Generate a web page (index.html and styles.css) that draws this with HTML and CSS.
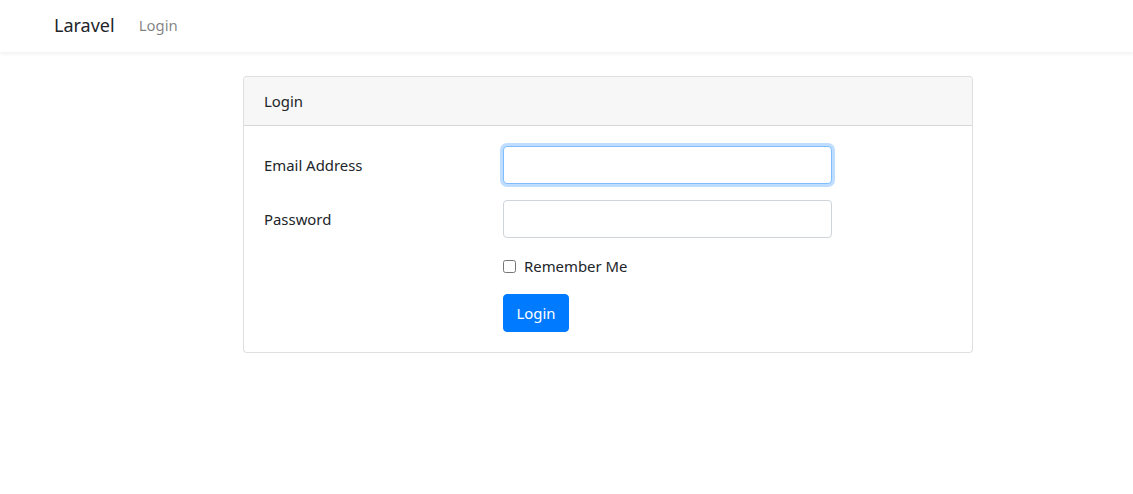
FILE: index.html
```html
<!DOCTYPE html>
<html>
<head>
<meta charset="utf-8">
<link rel="stylesheet" href="styles.css">
</head>
<body>
<nav class="navbar">
  <a class="brand" href="#">Laravel</a>
  <a class="nav-link" href="#">Login</a>
</nav>
<main class="main">
  <div class="card">
    <div class="card-header">Login</div>
    <div class="card-body">
      <div class="form-row">
        <label class="label">Email Address</label>
        <div class="field"><input class="input focus" type="email"></div>
      </div>
      <div class="form-row">
        <label class="label">Password</label>
        <div class="field"><input class="input" type="password"></div>
      </div>
      <div class="form-row">
        <span class="label"></span>
        <div class="field check"><input type="checkbox" class="checkbox"><span>Remember Me</span></div>
      </div>
      <div class="form-row last">
        <span class="label"></span>
        <div class="field"><button class="btn">Login</button></div>
      </div>
    </div>
  </div>
</main>
</body>
</html>
```
FILE: styles.css
```css
* { box-sizing: border-box; }
html, body { margin: 0; padding: 0; }
body {
  font-family: "Segoe UI", "Noto Sans", "Open Sans", sans-serif;
  font-size: 14.9px;
  line-height: 1.6;
  color: #212529;
  background: #fff;
}
.navbar {
  height: 52px;
  display: flex;
  align-items: center;
  padding-left: 54px;
  padding-bottom: 1px;
  background: #fff;
  box-shadow: 0 2px 4px rgba(0,0,0,0.06);
}
.brand {
  font-size: 18px;
  color: #212529;
  text-decoration: none;
  margin-right: 24px;
}
.nav-link {
  color: rgba(0,0,0,0.5);
  text-decoration: none;
}
.main { padding-top: 24px; }
.card {
  margin-left: 243px;
  width: 730px;
  border: 1px solid rgba(0,0,0,0.125);
  border-radius: 4px;
  background: #fff;
}
.card-header {
  height: 49px;
  padding: 1px 20px 0;
  display: flex;
  align-items: center;
  background: #f7f7f7;
  border-bottom: 1px solid rgba(0,0,0,0.125);
  border-radius: 3px 3px 0 0;
}
.card-body { padding: 20px 20px 20px 20px; }
.form-row {
  display: flex;
  align-items: center;
  margin-bottom: 16px;
}
.form-row.last { margin-bottom: 0; }
.label { width: 239px; flex: none; padding-top: 1px; }
.field { width: 329px; }
.input {
  display: block;
  width: 329px;
  height: 38px;
  border: 1px solid #ced4da;
  border-radius: 4px;
  font: inherit;
  padding: 6px 12px;
  outline: none;
}
.input.focus {
  border-color: #80bdff;
  box-shadow: 0 0 0 3px rgba(0,123,255,0.25);
}
.check {
  display: flex;
  align-items: center;
  height: 24px;
  padding-top: 1px;
}
.checkbox {
  margin: 0 8px 0 0;
  width: 13px;
  height: 13px;
}
.btn {
  height: 38px;
  width: 66px;
  padding: 1px 0 0;
  background: #007bff;
  color: #fff;
  border: 1px solid #007bff;
  border-radius: 4px;
  font: inherit;
}
```
